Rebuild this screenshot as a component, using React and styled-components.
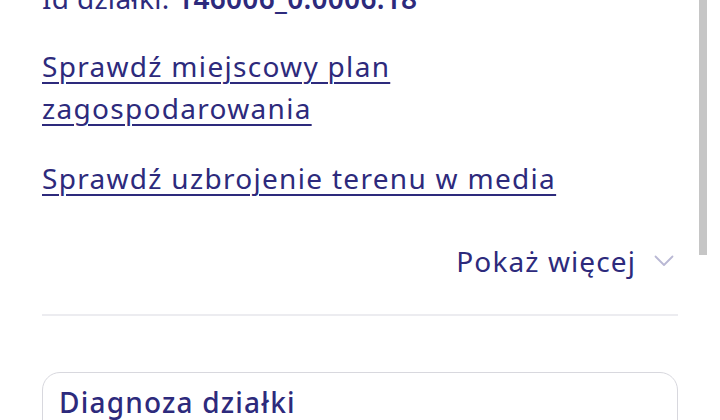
import React from "react";
import styled, { createGlobalStyle } from "styled-components";

const Global = createGlobalStyle`
  html, body { margin: 0; padding: 0; background: #fff; overflow: hidden; }
  body { font-family: "Noto Sans", "Open Sans", sans-serif; }
`;

const Page = styled.div`
  position: relative;
  width: 720px;
  height: 420px;
  overflow: hidden;
`;

const Content = styled.div`
  padding: 0 42px;
  margin-top: -23px;
  display: flex;
  flex-direction: column;
`;

const IdLine = styled.div`
  font-size: 28px;
  line-height: 42px;
  color: #2d2a7c;
  letter-spacing: 0.3px;
  b { font-weight: 600; }
`;

const LinkBlock = styled.a`
  display: block;
  margin-top: ${(p) => p.$mt}px;
  font-size: 28px;
  line-height: 42px;
  color: #2d2a7c;
  letter-spacing: 1.3px;
  text-decoration: underline;
  text-decoration-thickness: 2px;
  text-underline-offset: 5px;
  max-width: ${(p) => (p.$wide ? "none" : "420px")};
`;

const MoreRow = styled.div`
  margin-top: 42px;
  display: flex;
  justify-content: flex-end;
  align-items: center;
  gap: 18px;
  font-size: 28px;
  line-height: 40px;
  letter-spacing: 1.1px;
  color: #2d2a7c;
  padding-right: 4px;
`;

const Divider = styled.hr`
  margin: 33px 0 0;
  border: 0;
  border-top: 2px solid #ececf0;
`;

const Card = styled.div`
  margin-top: 56px;
  border: 1px solid #d8d8de;
  border-radius: 18px;
  padding: 9px 16px;
  height: 120px;
`;

const CardTitle = styled.div`
  font-size: 28px;
  line-height: 40px;
  font-weight: 500;
  letter-spacing: 1.2px;
  color: #2d2a7c;
`;

const Scrollbar = styled.div`
  position: absolute;
  top: 0;
  left: 699px;
  width: 8px;
  height: 255px;
  background: #c6c6c6;
`;

const Chevron = () => (
  <svg width="20" height="12" viewBox="0 0 20 12" fill="none">
    <path d="M1.5 1.5 L10 10 L18.5 1.5" stroke="#b9b8d4" strokeWidth="1.8" strokeLinecap="round" strokeLinejoin="round" />
  </svg>
);

export default function App() {
  return (
    <Page>
      <Global />
      <Content>
        <IdLine>
          Id działki: <b>146006_0.0006.18</b>
        </IdLine>
        <LinkBlock $mt={26}>Sprawdź miejscowy plan zagospodarowania</LinkBlock>
        <LinkBlock $mt={28} $wide>Sprawdź uzbrojenie terenu w media</LinkBlock>
        <MoreRow>
          <span>Pokaż więcej</span>
          <Chevron />
        </MoreRow>
        <Divider />
        <Card>
          <CardTitle>Diagnoza działki</CardTitle>
        </Card>
      </Content>
      <Scrollbar />
    </Page>
  );
}
